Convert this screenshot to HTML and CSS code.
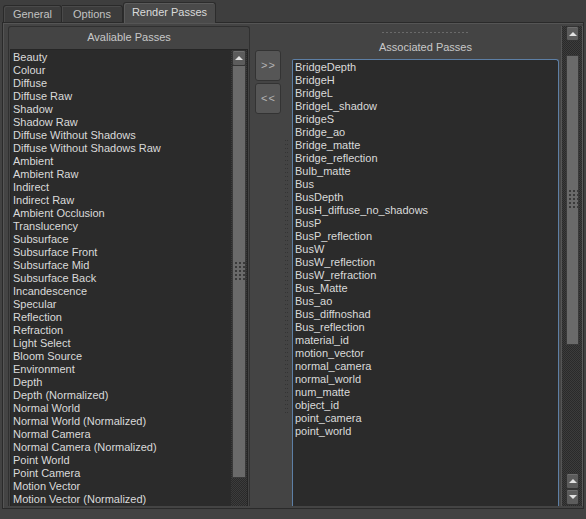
FILE: index.html
```html
<!DOCTYPE html>
<html>
<head>
<meta charset="utf-8">
<link rel="stylesheet" href="styles.css">
</head>
<body>
<div class="tabs">
  <div class="tab tab-general">General</div>
  <div class="tab tab-options">Options</div>
  <div class="tab tab-render active">Render Passes</div>
</div>
<div class="frame">
  <div class="left-pane">
    <div class="pane-title">Avaliable Passes</div>
    <div class="listbox">
      <div class="list">
        <div>Beauty</div>
        <div>Colour</div>
        <div>Diffuse</div>
        <div>Diffuse Raw</div>
        <div>Shadow</div>
        <div>Shadow Raw</div>
        <div>Diffuse Without Shadows</div>
        <div>Diffuse Without Shadows Raw</div>
        <div>Ambient</div>
        <div>Ambient Raw</div>
        <div>Indirect</div>
        <div>Indirect Raw</div>
        <div>Ambient Occlusion</div>
        <div>Translucency</div>
        <div>Subsurface</div>
        <div>Subsurface Front</div>
        <div>Subsurface Mid</div>
        <div>Subsurface Back</div>
        <div>Incandescence</div>
        <div>Specular</div>
        <div>Reflection</div>
        <div>Refraction</div>
        <div>Light Select</div>
        <div>Bloom Source</div>
        <div>Environment</div>
        <div>Depth</div>
        <div>Depth (Normalized)</div>
        <div>Normal World</div>
        <div>Normal World (Normalized)</div>
        <div>Normal Camera</div>
        <div>Normal Camera (Normalized)</div>
        <div>Point World</div>
        <div>Point Camera</div>
        <div>Motion Vector</div>
        <div>Motion Vector (Normalized)</div>
      </div>
      <div class="vscroll">
        <div class="sbtn up"><span class="arrow-up"></span></div>
        <div class="thumb thumb-left"><span class="grip-dots"></span></div>
        <div class="track"></div>
      </div>
    </div>
  </div>
  <div class="buttons">
    <div class="btn">&gt;&gt;</div>
    <div class="btn">&lt;&lt;</div>
  </div>
  <div class="splitter"><div class="splitter-dots"></div></div>
  <div class="right-pane">
    <div class="grip-top"><div class="grip-line"></div></div>
    <div class="pane-title right-title">Associated Passes</div>
    <div class="list assoc">
      <div>BridgeDepth</div>
      <div>BridgeH</div>
      <div>BridgeL</div>
      <div>BridgeL_shadow</div>
      <div>BridgeS</div>
      <div>Bridge_ao</div>
      <div>Bridge_matte</div>
      <div>Bridge_reflection</div>
      <div>Bulb_matte</div>
      <div>Bus</div>
      <div>BusDepth</div>
      <div>BusH_diffuse_no_shadows</div>
      <div>BusP</div>
      <div>BusP_reflection</div>
      <div>BusW</div>
      <div>BusW_reflection</div>
      <div>BusW_refraction</div>
      <div>Bus_Matte</div>
      <div>Bus_ao</div>
      <div>Bus_diffnoshad</div>
      <div>Bus_reflection</div>
      <div>material_id</div>
      <div>motion_vector</div>
      <div>normal_camera</div>
      <div>normal_world</div>
      <div>num_matte</div>
      <div>object_id</div>
      <div>point_camera</div>
      <div>point_world</div>
    </div>
  </div>
  <div class="outer-scroll">
    <div class="sbtn up top-btn"><span class="arrow-up"></span></div>
    <div class="track short"></div>
    <div class="thumb thumb-right"><span class="grip-dots"></span></div>
    <div class="track"></div>
    <div class="sbtn up"><span class="arrow-up"></span></div>
    <div class="sbtn down"><span class="arrow-down"></span></div>
  </div>
</div>
<div class="bottom-bar"></div>
</body>
</html>
```
FILE: styles.css
```css
* { box-sizing: border-box; }
html, body { margin: 0; padding: 0; }
body {
  width: 586px;
  height: 519px;
  overflow: hidden;
  background: #424242;
  font-family: "Liberation Sans", Arial, sans-serif;
  font-size: 11px;
  color: #dadada;
}

/* tabs */
.tabs {
  display: flex;
  align-items: flex-end;
  height: 22px;
  padding-left: 3px;
  background: #3e3e3e;
}
.tab {
  height: 17px;
  line-height: 16px;
  text-align: center;
  color: #c2c2c2;
  background: #3c3c3c;
  border: 1px solid #2a2a2a;
  border-bottom: none;
  border-radius: 3px 3px 0 0;
  box-shadow: inset 1px 1px 0 #4a4a4a;
}
.tab-general { width: 59px; }
.tab-options { width: 61px; border-left: none; border-radius: 0 3px 0 0; }
.tab-render { width: 93px; }
.tab.active {
  line-height: 19px;
  background: #4a4a4a;
  color: #dadada;
  border-color: #2c2c2c;
  box-shadow: inset 1px 1px 0 #5a5a5a;
  position: relative;
  z-index: 1;
  margin-bottom: -1px;
  height: 21px;
}

/* frame */
.frame {
  margin: 0 2px;
  height: 487px;
  display: flex;
  background: #444444;
  border: 1px solid #2a2a2a;
  box-shadow: inset 1px 1px 0 #555555;
  padding: 3px 0 2px 5px;
}

.left-pane {
  width: 242px;
  display: flex;
  flex-direction: column;
  border: 1px solid #303030;
  border-bottom: none;
  border-radius: 3px 3px 0 0;
  padding: 0 1px;
}
.pane-title {
  height: 22px;
  line-height: 21px;
  text-align: center;
  color: #c8c8c8;
}
.listbox {
  flex: 1;
  display: flex;
  min-height: 0;
  border: 1px solid #262626;
  border-bottom: none;
}
.list {
  flex: 1;
  min-width: 0;
  overflow: hidden;
  background: #2b2b2b;
  line-height: 13px;
  padding-left: 2px;
  padding-top: 1px;
  white-space: nowrap;
}

.vscroll {
  width: 16px;
  display: flex;
  flex-direction: column;
  background: repeating-conic-gradient(#3c3c3c 0 25%, #2a2a2a 0 50%) 0 0 / 2px 2px;
}
.sbtn {
  height: 16px;
  margin: 0 1px;
  flex: none;
  background: #5c5c5c;
  border: 1px solid #343434;
  border-radius: 2px;
  box-shadow: inset 0 1px 0 #6e6e6e;
  display: flex;
  align-items: center;
  justify-content: center;
}
.arrow-up {
  width: 0; height: 0;
  border-left: 4px solid transparent;
  border-right: 4px solid transparent;
  border-bottom: 4px solid #e2e2e2;
}
.arrow-down {
  width: 0; height: 0;
  border-left: 4px solid transparent;
  border-right: 4px solid transparent;
  border-top: 4px solid #e2e2e2;
}
.thumb {
  flex: none;
  margin: 0 1px;
  background: #6a6a6a;
  border: 1px solid #3a3a3a;
  border-top: none;
  display: flex;
  align-items: center;
  justify-content: center;
}
.thumb-left { height: 412px; }
.track { flex: 1; }
.grip-dots {
  width: 12px;
  height: 20px;
  margin-left: 2px;
  background: conic-gradient(from 270deg at 2px 2px, #3a3a3a 25%, transparent 0) 0 0 / 4px 4px;
}

/* middle buttons */
.buttons {
  width: 26px;
  margin-left: 5px;
  padding-top: 24px;
  display: flex;
  flex-direction: column;
  gap: 2px;
}
.btn {
  height: 31px;
  line-height: 29px;
  text-align: center;
  background: #565656;
  border: 1px solid #333333;
  border-radius: 3px;
  color: #b4b4b4;
  letter-spacing: 1px;
  padding-left: 1px;
}

.splitter {
  width: 11px;
  padding-top: 114px;
}
.splitter-dots {
  width: 3px;
  height: 276px;
  margin-left: 4px;
  background: conic-gradient(from 270deg at 1px 1px, #333 25%, transparent 0) 0 0 / 2px 4px;
}

/* right pane */
.right-pane {
  flex: 1;
  display: flex;
  flex-direction: column;
  padding-right: 2px;
}
.grip-top {
  height: 8px;
  padding-top: 6px;
}
.grip-line {
  width: 88px;
  height: 2px;
  margin: 0 auto;
  background: conic-gradient(from 270deg at 2px 1px, #6a6a6a 25%, transparent 0) 0 0 / 4px 2px;
}
.right-title {
  height: 25px;
  line-height: 26px;
}
.assoc {
  border: 1px solid #5d7fa5;
  border-bottom: none;
  border-radius: 2px 3px 0 0;
  padding-left: 2px;
}

/* outer scroll */
.outer-scroll {
  width: 22px;
  display: flex;
  flex-direction: column;
  border-left: 1px solid #555555;
  border-right: 1px solid #5a5a5a;
  padding: 0 2px 1px 3px;
  background: repeating-conic-gradient(#3c3c3c 0 25%, #2a2a2a 0 50%) 0 0 / 2px 2px;
}
.outer-scroll .sbtn { height: 16px; margin: 0 1px 0 1px; }
.outer-scroll .top-btn { height: 15px; }
.outer-scroll .track.short { flex: none; height: 14px; }
.thumb-right {
  height: 290px;
  border-top: 1px solid #3a3a3a;
}

.bottom-bar {
  height: 10px;
  background: #424242;
}
```
